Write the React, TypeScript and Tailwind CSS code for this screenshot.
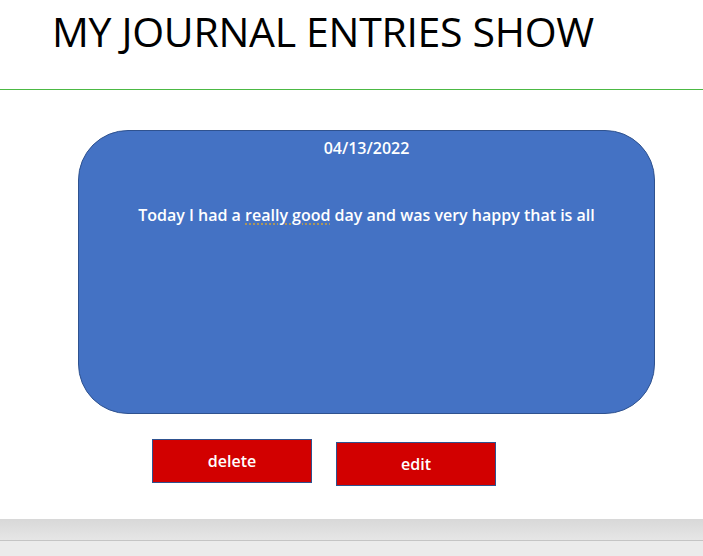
export default function App() {
  return (
    <div className="flex h-[556px] w-[703px] flex-col bg-white" style={{ fontFamily: '"Open Sans", "Liberation Sans", sans-serif' }}>
      <div className="h-[89px]">
        <h1 className="pl-[52px] pt-[6px] text-[41px] leading-[50px] tracking-[-0.3px] text-black">MY JOURNAL ENTRIES SHOW</h1>
      </div>
      <div className="h-px w-full bg-[#4cb944]" />
      <div className="pl-[78px] pt-[40px]">
        <div className="flex h-[284px] w-[577px] flex-col items-center rounded-[50px] border border-[#2f528f] bg-[#4472c4] text-white">
          <p className="mt-[6px] text-[16px] font-semibold leading-[22px]">04/13/2022</p>
          <p className="mt-[45px] text-[16px] font-semibold leading-[22px]">
            Today I had a{" "}
            <span className="underline decoration-[#c8a040] decoration-dotted underline-offset-[3px]">really good</span>{" "}
            day and was very happy that is all
          </p>
        </div>
      </div>
      <div className="flex items-start gap-[24px] pl-[152px] pt-[25px]">
        <button className="h-[44px] w-[160px] border border-[#2f528f] bg-[#d20000] text-[16px] font-semibold text-white">delete</button>
        <button className="mt-[3px] h-[44px] w-[160px] border border-[#2f528f] bg-[#d20000] text-[16px] font-semibold text-white">edit</button>
      </div>
      <div className="mt-auto flex h-[37px] flex-col">
        <div className="h-[22px] border-b border-[#c4c4c4] bg-gradient-to-b from-[#d8d8d8] to-[#e6e6e6]" />
        <div className="flex-1 bg-[#ebebeb]" />
      </div>
    </div>
  );
}
